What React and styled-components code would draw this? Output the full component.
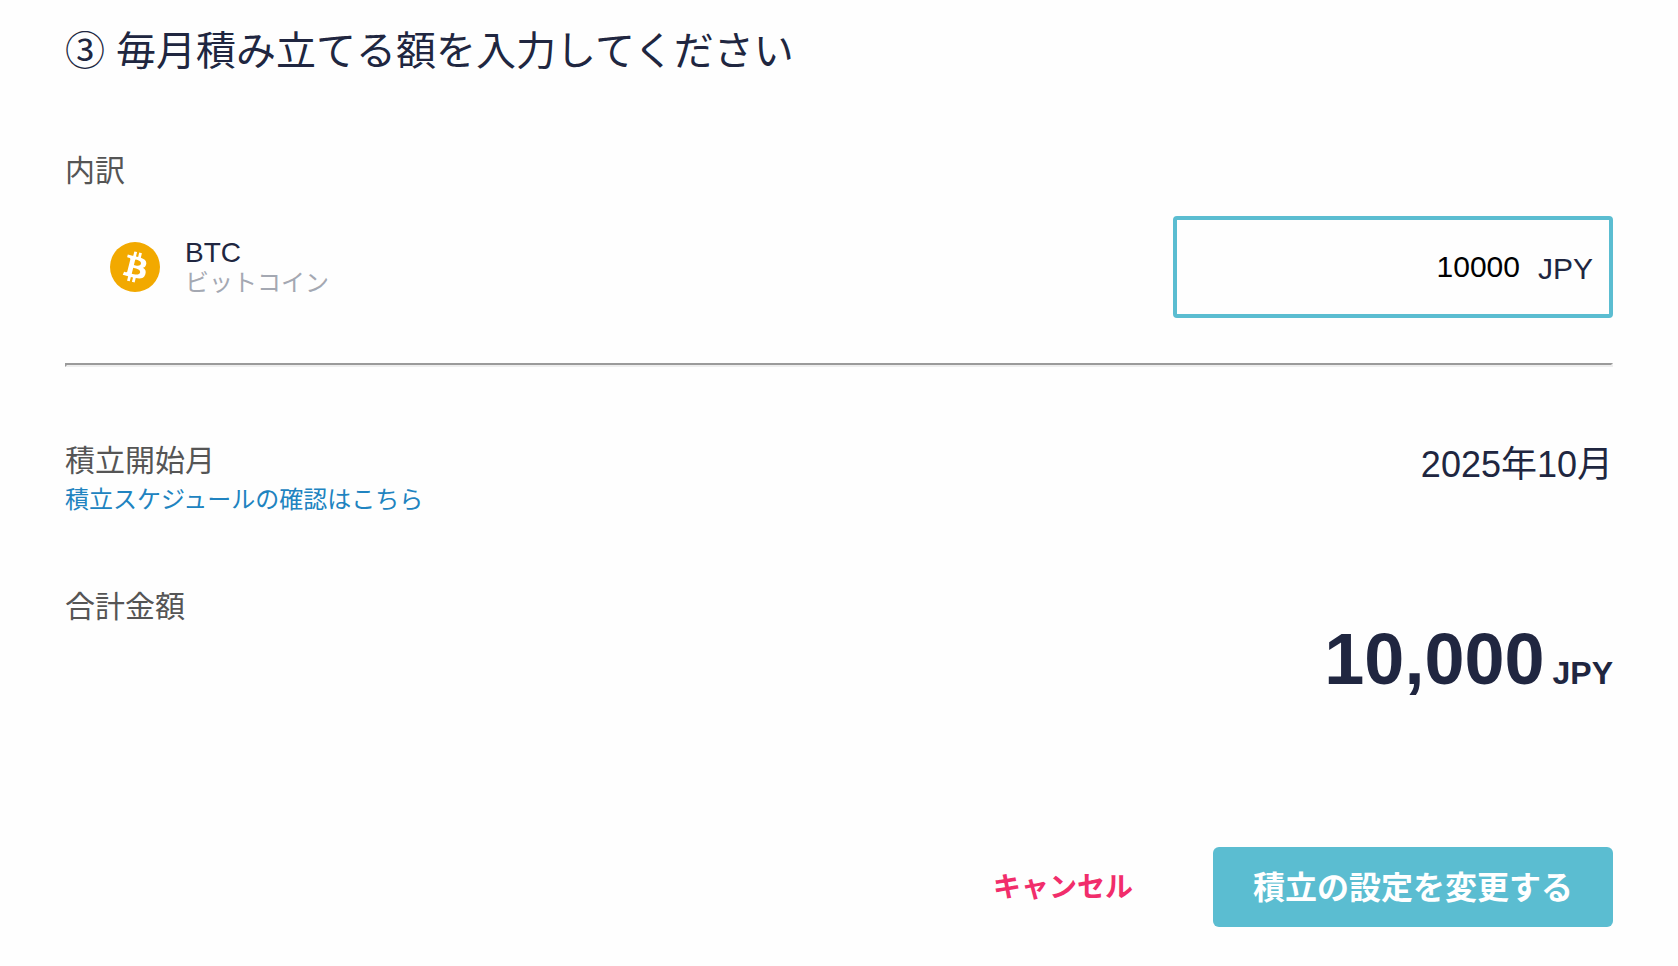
import { useState } from "react";
import styled, { createGlobalStyle } from "styled-components";

const GlobalStyle = createGlobalStyle`
  * {
    box-sizing: border-box;
  }
  body {
    margin: 0;
    background-color: #fefefe;
    color: #202640;
    font-family: "Liberation Sans", "Noto Sans CJK JP", sans-serif;
  }
`;

const Page = styled.form`
  padding: 21px 65px 39px;
`;

const Title = styled.h1`
  margin: 0;
  font-size: 40px;
  font-weight: normal;
  line-height: 60px;
`;

const Label = styled.div`
  color: #555555;
  font-size: 30px;
  line-height: 40px;
`;

const Breakdown = styled.section`
  margin-top: 70px;
`;

const CoinRow = styled.div`
  display: flex;
  align-items: center;
  justify-content: space-between;
  margin-top: 25px;
  padding-left: 45px;
`;

const Coin = styled.label`
  display: flex;
  align-items: center;
  gap: 25px;
`;

const CoinIcon = styled.svg`
  width: 50px;
  height: 50px;
`;

const CoinText = styled.div`
  padding-top: 2px;
`;

const CoinName = styled.div`
  font-size: 28px;
  line-height: 30px;
`;

const CoinSubName = styled.div`
  color: #a4a8b2;
  font-size: 24px;
  line-height: 30px;
`;

const AmountBox = styled.div`
  display: flex;
  align-items: center;
  gap: 18px;
  width: 440px;
  height: 102px;
  padding: 0 16px;
  border: 4px solid #5bbdd1;
  border-radius: 4px;
`;

const AmountInput = styled.input`
  flex: 1;
  min-width: 0;
  padding: 0;
  border: none;
  outline: none;
  background: transparent;
  color: #000000;
  font-family: inherit;
  font-size: 30px;
  text-align: right;
`;

const AmountUnit = styled.span`
  padding-top: 3px;
  font-size: 30px;
`;

const Divider = styled.hr`
  margin: 45px 0 0;
  border: 2px solid;
  border-color: #9a9a9a #eeeeee #eeeeee #9a9a9a;
`;

const InfoRow = styled.section`
  display: flex;
  justify-content: space-between;
  margin-top: 74px;
`;

const ScheduleLink = styled.a`
  display: block;
  color: #2083c0;
  font-size: 24px;
  line-height: 38px;
  text-decoration: none;
`;

const StartMonth = styled.div`
  font-size: 36px;
  line-height: 48px;
`;

const Total = styled.section`
  margin-top: 68px;
`;

const TotalAmount = styled.div`
  font-size: 72px;
  font-weight: bold;
  line-height: 64px;
  text-align: right;
`;

const Unit = styled.span`
  margin-left: 8px;
  font-size: 32px;
`;

const Actions = styled.div`
  display: flex;
  align-items: center;
  justify-content: flex-end;
  gap: 40px;
  margin-top: 142px;
`;

const Button = styled.button`
  height: 80px;
  padding: 0 40px 4px;
  border: none;
  border-radius: 6px;
  font-family: inherit;
  font-weight: bold;
  cursor: pointer;
`;

const CancelButton = styled(Button)`
  background: transparent;
  color: #f12d6b;
  font-size: 28px;
`;

const SubmitButton = styled(Button)`
  background-color: #5bbdd1;
  color: #ffffff;
  font-size: 32px;
  &:hover {
    background-color: #4bafc4;
  }
`;

function BitcoinIcon() {
  return (
    <CoinIcon viewBox="0 0 32 32" aria-hidden="true">
      <circle cx="16" cy="16" r="16" fill="#f2a900" />
      <path
        fill="#ffffff"
        d="M23.189 14.02c.314-2.096-1.283-3.223-3.465-3.975l.708-2.84-1.728-.43-.69 2.765c-.454-.114-.92-.22-1.385-.326l.695-2.783L15.596 6l-.708 2.839c-.376-.086-.746-.17-1.104-.26l.002-.009-2.384-.595-.46 1.846s1.283.294 1.256.312c.7.175.826.638.805 1.006l-.806 3.235c.048.012.11.03.18.057l-.183-.045-1.13 4.532c-.086.212-.303.531-.793.41.018.025-1.256-.313-1.256-.313l-.858 1.978 2.25.561c.418.105.828.215 1.231.318l-.715 2.872 1.727.43.708-2.84c.472.127.93.245 1.378.357l-.706 2.828 1.728.43.715-2.866c2.948.558 5.164.333 6.097-2.333.752-2.146-.037-3.385-1.588-4.192 1.13-.26 1.98-1.003 2.207-2.538zm-3.95 5.538c-.533 2.147-4.148.986-5.32.695l.95-3.805c1.172.293 4.929.872 4.37 3.11zm.535-5.569c-.487 1.953-3.495.96-4.47.717l.86-3.45c.975.243 4.118.696 3.61 2.733z"
      />
    </CoinIcon>
  );
}

export default function App() {
  const [amount, setAmount] = useState("10000");

  return (
    <>
      <GlobalStyle />
      <Page onSubmit={(e) => e.preventDefault()}>
        <Title>③ 毎月積み立てる額を入力してください</Title>
        <Breakdown>
          <Label>内訳</Label>
          <CoinRow>
            <Coin htmlFor="btc-amount">
              <BitcoinIcon />
              <CoinText>
                <CoinName>BTC</CoinName>
                <CoinSubName>ビットコイン</CoinSubName>
              </CoinText>
            </Coin>
            <AmountBox>
              <AmountInput
                id="btc-amount"
                inputMode="numeric"
                value={amount}
                onChange={(e) => setAmount(e.target.value)}
              />
              <AmountUnit>JPY</AmountUnit>
            </AmountBox>
          </CoinRow>
        </Breakdown>
        <Divider />
        <InfoRow>
          <div>
            <Label>積立開始月</Label>
            <ScheduleLink href="#schedule">
              積立スケジュールの確認はこちら
            </ScheduleLink>
          </div>
          <StartMonth>2025年10月</StartMonth>
        </InfoRow>
        <Total>
          <Label>合計金額</Label>
          <TotalAmount>
            {Number(amount).toLocaleString("en-US")}
            <Unit>JPY</Unit>
          </TotalAmount>
        </Total>
        <Actions>
          <CancelButton type="button">キャンセル</CancelButton>
          <SubmitButton type="submit">積立の設定を変更する</SubmitButton>
        </Actions>
      </Page>
    </>
  );
}
